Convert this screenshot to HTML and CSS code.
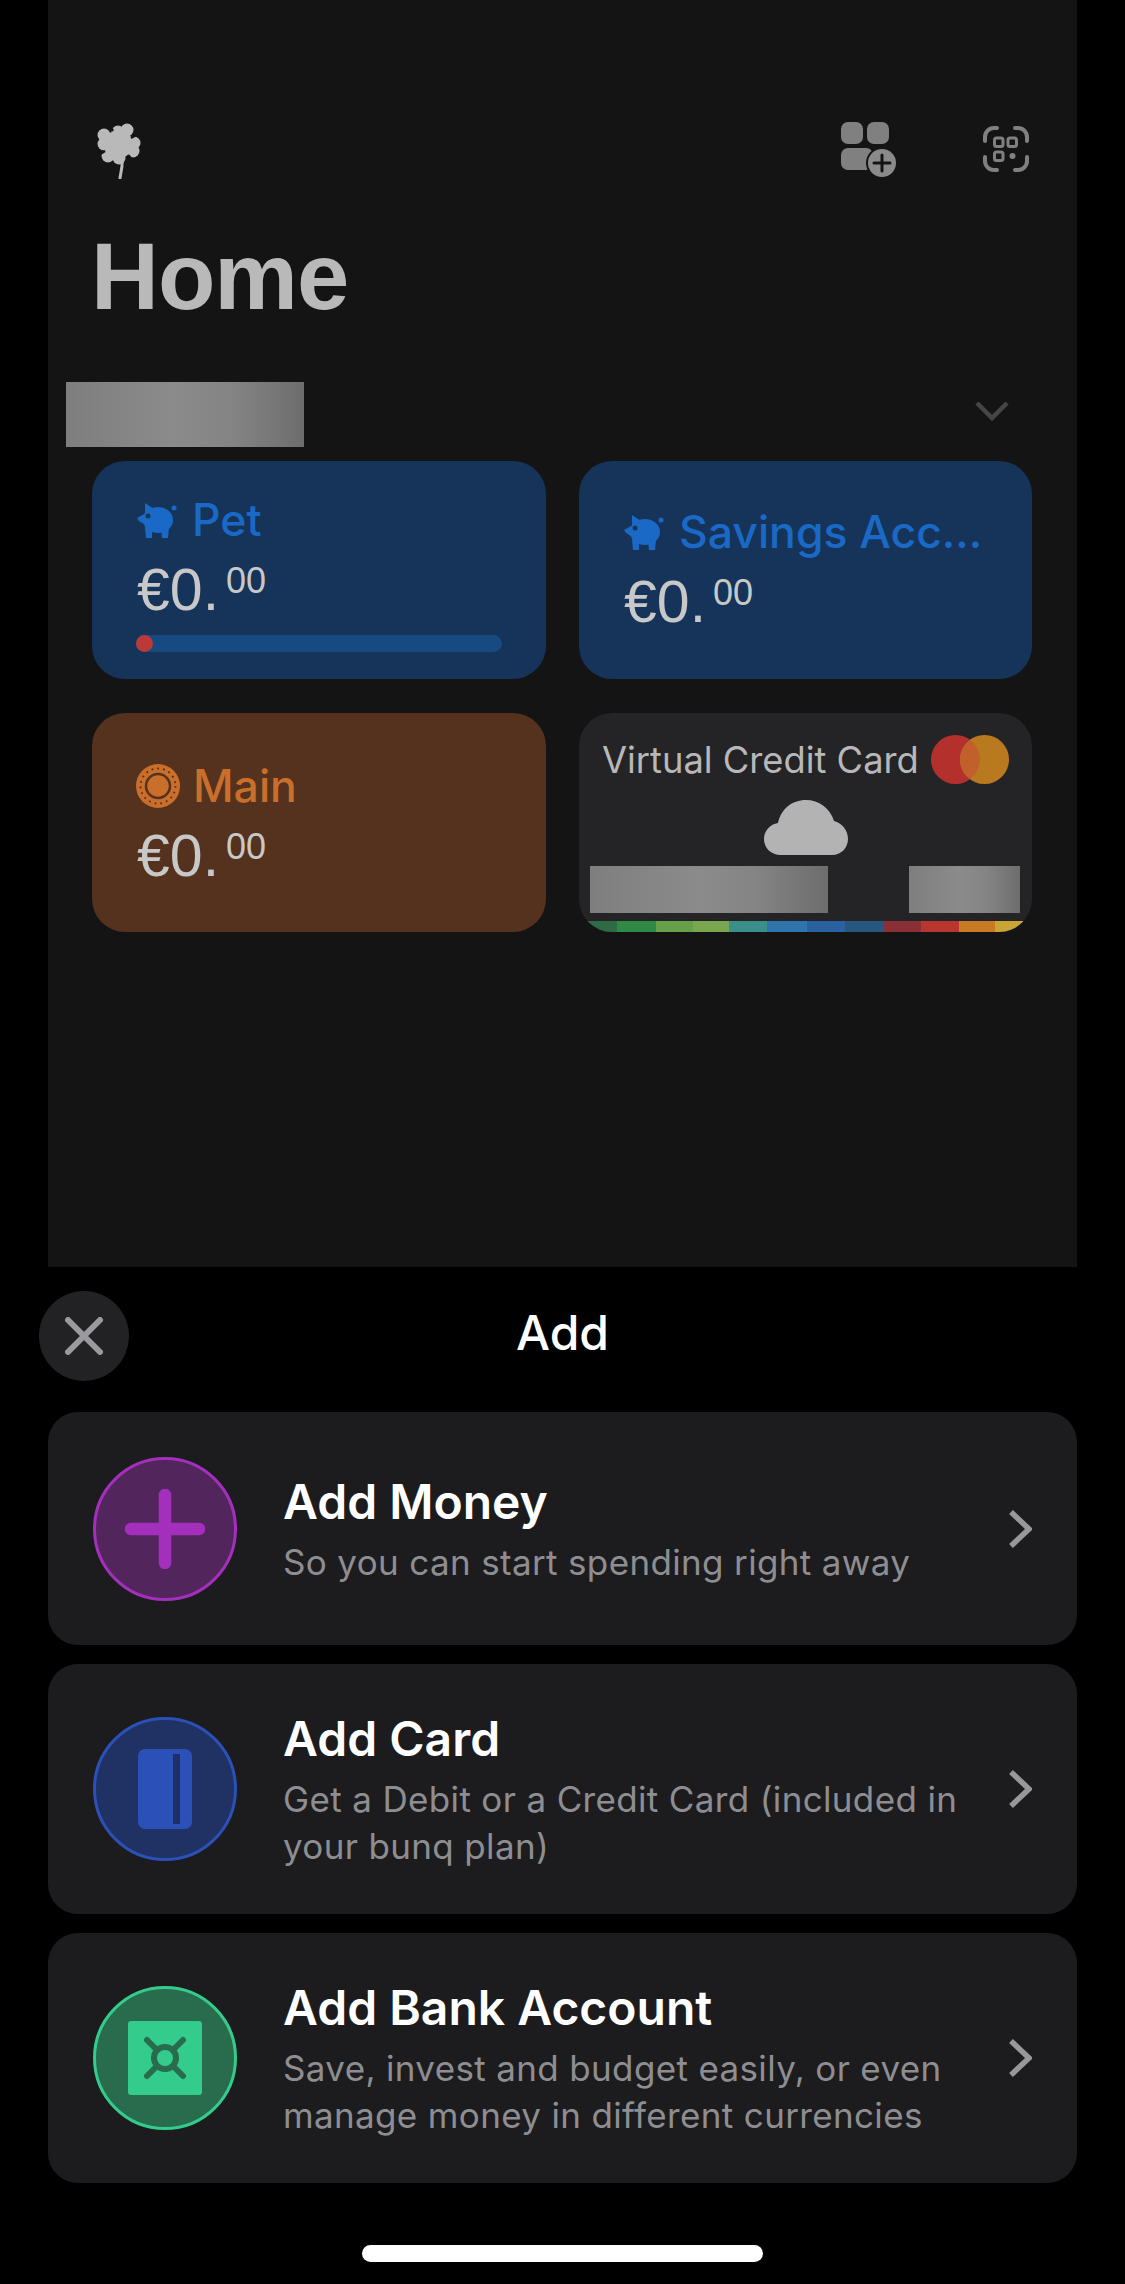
FILE: index.html
```html
<!DOCTYPE html>
<html lang="en">
<head>
<meta charset="utf-8">
<title>Add</title>
<link rel="stylesheet" href="styles.css">
</head>
<body>
<main class="phone">
  <section class="home">
    <div class="topbar">
      <svg class="clover" viewBox="0 0 44 56"><g fill="#b9b9ba"><circle cx="21" cy="9" r="6.500"/><circle cx="30" cy="7" r="6.500"/><circle cx="7" cy="12" r="6.500"/><circle cx="7" cy="21" r="6.500"/><circle cx="37" cy="20" r="6.500"/><circle cx="36" cy="28" r="6.500"/><circle cx="11" cy="33" r="6.500"/><circle cx="22" cy="35" r="6.500"/><circle cx="22" cy="21" r="14"/></g><path d="M16 8L11 0M34 15l10-6M8 28l-8 5M31 32l8 9" stroke="#141415" stroke-width="2.500" fill="none"/><path d="M25 36c1 6-1 12-2 19" fill="none" stroke="#b9b9ba" stroke-width="3" stroke-linecap="round"/></svg>
      <div class="top-actions">
        <svg class="ic-add" viewBox="0 0 56 56"><g fill="#808080"><rect x="0" y="0" width="22" height="22" rx="7"/><rect x="26" y="0" width="22" height="22" rx="7"/><rect x="0" y="26" width="32" height="22" rx="7"/></g><circle cx="41" cy="41" r="16" fill="#141415"/><circle cx="41" cy="41" r="14" fill="#8a8a8a"/><path d="M41 33v16M33 41h16" stroke="#141415" stroke-width="3" stroke-linecap="round"/></svg>
        <svg class="ic-scan" viewBox="0 0 46 46"><g fill="none" stroke="#808080" stroke-width="4" stroke-linecap="round"><path d="M2 15V11a9 9 0 0 1 9-9h3M32 2h3a9 9 0 0 1 9 9v4M44 31v4a9 9 0 0 1-9 9h-3M14 44h-3a9 9 0 0 1-9-9v-4"/></g><g fill="none" stroke="#808080" stroke-width="3"><rect x="11.500" y="12" width="8.500" height="8.500" rx="2"/><rect x="25" y="12" width="8.500" height="8.500" rx="2"/><rect x="11.500" y="26" width="8.500" height="8.500" rx="2"/></g><circle cx="29.500" cy="30" r="3" fill="#808080"/></svg>
      </div>
    </div>
    <h1 class="page-title">Home</h1>
    <div class="account-row">
      <div class="redact redact-name"></div>
      <svg class="ic-down" viewBox="0 0 36 22"><path d="M3 3l15 15L33 3" fill="none" stroke="#454546" stroke-width="4.500"/></svg>
    </div>
    <div class="cards">
      <article class="card card-blue card-goal">
        <div class="card-label">
          <svg class="ic-pig" viewBox="0 0 40 38"><g fill="#1a69c6"><ellipse cx="21" cy="19" rx="15" ry="13"/><path d="M8 2l9 6-9 7z"/><path d="M9 12L0 17l2 3 5 3 4 1z"/><path d="M8 26h7v11H9zM24 26h8l-1 11h-6z"/><circle cx="37" cy="7" r="2.500"/></g><circle cx="11" cy="15" r="2.500" fill="#16345a"/></svg>
          <span>Pet</span>
        </div>
        <div class="amount">€0.<span class="cents">00</span></div>
        <div class="progress"><span class="progress-dot"></span></div>
      </article>
      <article class="card card-blue card-savings">
        <div class="card-label">
          <svg class="ic-pig" viewBox="0 0 40 38"><g fill="#1a69c6"><ellipse cx="21" cy="19" rx="15" ry="13"/><path d="M8 2l9 6-9 7z"/><path d="M9 12L0 17l2 3 5 3 4 1z"/><path d="M8 26h7v11H9zM24 26h8l-1 11h-6z"/><circle cx="37" cy="7" r="2.500"/></g><circle cx="11" cy="15" r="2.500" fill="#16345a"/></svg>
          <span>Savings Acc...</span>
        </div>
        <div class="amount">€0.<span class="cents">00</span></div>
      </article>
      <article class="card card-brown">
        <div class="card-label">
          <svg class="ic-coin" viewBox="0 0 44 44"><circle cx="22" cy="22" r="22" fill="#c96f2b"/><circle cx="22" cy="22" r="17.500" fill="none" stroke="#54321d" stroke-width="1.800" stroke-dasharray="1.800 4"/><circle cx="22" cy="22" r="12" fill="#c96f2b" stroke="#54321d" stroke-width="2.500"/></svg>
          <span>Main</span>
        </div>
        <div class="amount">€0.<span class="cents">00</span></div>
      </article>
      <article class="card-virtual">
        <div class="virtual-head">
          <span class="virtual-name">Virtual Credit Card</span>
          <svg class="ic-mc" viewBox="0 0 78 49"><circle cx="24.500" cy="24.500" r="24.500" fill="#b3302c"/><circle cx="53.500" cy="24.500" r="24.500" fill="#b9791f"/><path d="M39 4.800a24.500 24.500 0 0 1 0 39.400a24.500 24.500 0 0 1 0-39.400z" fill="#c2602c"/></svg>
        </div>
        <svg class="ic-cloud" viewBox="0 0 84 55"><path d="M17 55C7 55 0 48 0 39c0-8 6-15 14-16C17 9 28 0 42 0c13 0 24 8 28 21 8 2 14 9 14 18 0 9-7 16-16 16z" fill="#b3b3b4"/></svg>
        <div class="virtual-redacts">
          <div class="redact redact-number"></div>
          <div class="redact redact-expiry"></div>
        </div>
        <div class="rainbow"></div>
      </article>
    </div>
  </section>

  <section class="sheet">
    <header class="sheet-head">
      <button class="close" aria-label="Close"><svg viewBox="0 0 38 38"><path d="M3 3l32 32M35 3L3 35" stroke="#9a9a9e" stroke-width="6" stroke-linecap="round"/></svg></button>
      <h2 class="sheet-title">Add</h2>
    </header>
    <div class="options">
      <a class="option option-money">
        <span class="badge badge-purple"><svg viewBox="0 0 80 80"><path d="M40 6v68M6 40h68" stroke="#a42fbd" stroke-width="12.500" stroke-linecap="round"/></svg></span>
        <span class="option-text"><strong>Add Money</strong><small>So you can start spending right away</small></span>
        <svg class="chevron" viewBox="0 0 24 40"><path d="M3 3l18 17L3 37" fill="none" stroke="#98989c" stroke-width="5.500"/></svg>
      </a>
      <a class="option option-card">
        <span class="badge badge-blue"><svg class="ic-card" viewBox="0 0 54 80"><rect width="54" height="80" rx="7" fill="#2b50b8"/><rect x="35" y="5" width="7" height="70" fill="#1f2f63"/></svg></span>
        <span class="option-text"><strong>Add Card</strong><small>Get a Debit or a Credit Card (included in your bunq plan)</small></span>
        <svg class="chevron" viewBox="0 0 24 40"><path d="M3 3l18 17L3 37" fill="none" stroke="#98989c" stroke-width="5.500"/></svg>
      </a>
      <a class="option option-bank">
        <span class="badge badge-green"><svg class="ic-safe" viewBox="0 0 74 74"><rect width="74" height="74" rx="3" fill="#33cc8c"/><path d="M19 19l36 36M55 19L19 55" stroke="#296b4d" stroke-width="6" stroke-linecap="round"/><circle cx="37" cy="37" r="11" fill="#33cc8c" stroke="#296b4d" stroke-width="6"/></svg></span>
        <span class="option-text"><strong>Add Bank Account</strong><small>Save, invest and budget easily, or even manage money in different currencies</small></span>
        <svg class="chevron" viewBox="0 0 24 40"><path d="M3 3l18 17L3 37" fill="none" stroke="#98989c" stroke-width="5.500"/></svg>
      </a>
    </div>
    <div class="home-indicator"></div>
  </section>
</main>
</body>
</html>
```
FILE: styles.css
```css
* { box-sizing: border-box; }
html, body { margin: 0; padding: 0; background: #000; }
body { font-family: "Inter", "Liberation Sans", sans-serif; color: #fff; }
.phone { width: 1125px; height: 2284px; overflow: hidden; }
svg { display: block; flex: none; }

.home { margin: 0 48px; height: 1267px; padding-top: 122px; background: #141415; }
.topbar { display: flex; justify-content: space-between; align-items: flex-start; padding: 0 48px 0 49px; height: 57px; }
.clover { width: 44px; height: 56px; margin-top: 1px; }
.top-actions { display: flex; align-items: flex-start; gap: 86px; }
.ic-add { width: 56px; height: 56px; }
.ic-scan { width: 46px; height: 46px; margin-top: 4px; }
.page-title { margin: 48px 0 0 43px; font-family: "Liberation Sans", sans-serif; font-size: 94px; line-height: 100px; font-weight: 700; color: #b9b9ba; letter-spacing: -1px; height: 100px; }

.account-row { display: flex; justify-content: space-between; align-items: center; margin-top: 55px; padding: 0 67px 0 18px; height: 65px; }
.redact { background: linear-gradient(90deg, #7e7e7e, #8b8b8b 45%, #848484 70%, #6d6d6d); }
.redact-name { width: 238px; height: 65px; }
.ic-down { width: 36px; height: 22px; margin-top: -8px; }

.cards { display: grid; grid-template-columns: 454px 453px; grid-template-rows: 218px 219px; gap: 34px 33px; margin: 14px 0 0 44px; }
.card { display: flex; flex-direction: column; justify-content: center; padding: 0 45px; border-radius: 33px; }
.card-goal { padding-top: 6px; }
.card-savings { padding-bottom: 2px; }
.card-blue { background: #16345a; color: #1a69c6; }
.card-brown { background: #54321d; color: #c96f2b; }
.card-label { display: flex; align-items: center; gap: 15px; height: 50px; font-size: 44.500px; font-weight: 500; white-space: nowrap; }
.ic-pig { width: 40px; height: 38px; }
.ic-coin { width: 44px; height: 44px; margin-left: -1px; margin-right: -2px; }
.amount { margin-top: 16px; height: 58px; font-family: "Liberation Sans", sans-serif; font-size: 59px; line-height: 58px; color: #c8c8c8; white-space: nowrap; }
.cents { font-size: 36px; line-height: 0; vertical-align: 17px; margin-left: 7px; }
.progress { position: relative; height: 17px; margin-top: 16px; width: 366px; margin-left: -1px; background: #174a80; border-radius: 9px; }
.progress-dot { position: absolute; left: 0; top: 0; width: 17px; height: 17px; border-radius: 50%; background: #bb3a38; }

.card-virtual { display: flex; flex-direction: column; overflow: hidden; border-radius: 33px; background: #242426; }
.virtual-head { display: flex; justify-content: space-between; align-items: center; padding: 22px 23px 0; }
.virtual-name { font-size: 36.300px; color: #b8b8b8; white-space: nowrap; }
.ic-mc { width: 78px; height: 49px; }
.ic-cloud { width: 84px; height: 55px; margin: 16px auto 0; }
.virtual-redacts { display: flex; justify-content: space-between; margin-top: 11px; padding: 0 12px 0 11px; }
.redact-number { width: 238px; height: 47px; }
.redact-expiry { width: 111px; height: 47px; }
.rainbow { height: 11px; margin-top: 8px; background: linear-gradient(90deg, #2e6b45 0 38px, #2f8a48 38px 77px, #66a04a 77px 114px, #7aa650 114px 150px, #3a9088 150px 188px, #2f75ab 188px 228px, #2a62a0 228px 266px, #27577f 266px 305px, #8a2f35 305px 342px, #b83530 342px 380px, #c87a25 380px 416px, #c8a535 416px 453px); }

.sheet { background: #000; }
.sheet-head { display: grid; grid-template-columns: 90px 1fr 90px; align-items: center; margin: 24px 39px 31px; }
.close { display: flex; align-items: center; justify-content: center; width: 90px; height: 90px; padding: 0; border: 0; border-radius: 50%; background: #222224; }
.close svg { width: 38px; height: 38px; }
.sheet-title { margin: -6px 0 0; text-align: center; font-size: 48px; line-height: 56px; font-weight: 500; color: #fff; }

.options { display: flex; flex-direction: column; gap: 19px; margin: 0 48px; }
.option { display: flex; align-items: center; gap: 46px; padding: 0 45px; background: #1c1c1e; border-radius: 30px; }
.option-money { height: 233px; }
.option-card { height: 250px; }
.option-bank { height: 250px; }
.badge { display: flex; align-items: center; justify-content: center; flex: none; width: 144px; height: 144px; border-radius: 50%; border: 3px solid; }
.badge-purple { background: #52265c; border-color: #a42fbd; }
.badge-purple svg { width: 80px; height: 80px; }
.badge-blue { background: #1f3263; border-color: #2b50b8; }
.ic-card { width: 54px; height: 80px; }
.badge-green { background: #296b4d; border-color: #33cc8c; }
.ic-safe { width: 74px; height: 74px; }
.option-text { flex: 1; display: flex; flex-direction: column; min-width: 0; }
.option-text strong { font-size: 48px; line-height: 62px; font-weight: 600; color: #fff; }
.option-text small { margin-top: 6px; font-size: 35px; line-height: 47px; color: #8e8e92; letter-spacing: 0.35px; }
.chevron { width: 24px; height: 40px; margin-left: -30px; }
.home-indicator { width: 401px; height: 17px; margin: 62px auto 0; border-radius: 9px; background: #fff; }
```
